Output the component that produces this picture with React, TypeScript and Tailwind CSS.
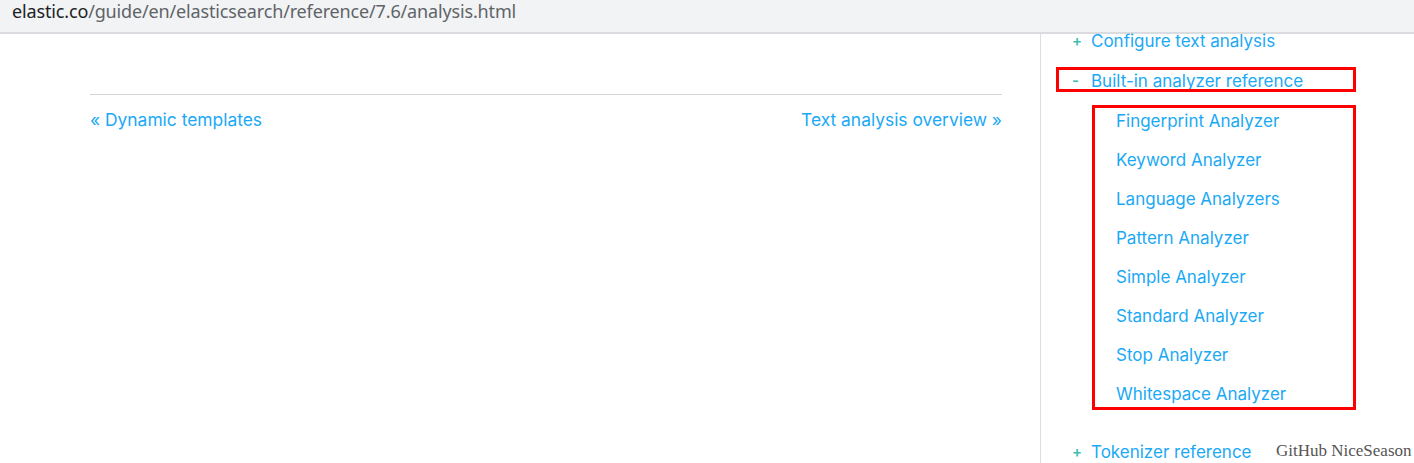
import React from "react";

const subItems = [
  "Fingerprint Analyzer",
  "Keyword Analyzer",
  "Language Analyzers",
  "Pattern Analyzer",
  "Simple Analyzer",
  "Standard Analyzer",
  "Stop Analyzer",
  "Whitespace Analyzer",
];

function Toggle({ open }: { open?: boolean }) {
  return (
    <span className="inline-block w-[20px] text-[#3ebeb0] text-[15px] font-semibold pl-[1px]">
      {open ? "-" : "+"}
    </span>
  );
}

export default function App() {
  return (
    <div className="relative w-[1414px] h-[463px] overflow-hidden bg-white font-['Inter',sans-serif]">
      <div className="h-[34px] bg-[#f1f3f4] border-b-2 border-[#dadce0] flex items-start">
        <div className="pl-[12px] text-[18px] leading-[22px] tracking-[-0.15px] font-['Noto_Sans',sans-serif] text-[#5f6368]">
          <span className="text-[#202124]">elastic.co</span>/guide/en/elasticsearch/reference/7.6/analysis.html
        </div>
      </div>

      <div className="flex h-[429px]">
        <main className="w-[1040px] pl-[90px] pr-[38px] pt-[60px]">
          <div className="border-t border-[#d4d4d4]" />
          <div className="flex justify-between mt-[14px] text-[17.4px] leading-[22px] text-[#1ba9f5]">
            <a>« Dynamic templates</a>
            <a>Text analysis overview »</a>
          </div>
        </main>

        <aside className="relative flex-1 border-l border-[#dddddd] pl-[30px]">
          <ul className="-mt-[12px] text-[17px] text-[#1ba9f5]">
            <li className="h-[39px] flex items-center">
              <Toggle />
              <span>Configure text analysis</span>
            </li>
            <li className="h-[41px] flex items-center">
              <Toggle open />
              <span>Built-in analyzer reference</span>
            </li>
            {subItems.map((s) => (
              <li key={s} className="h-[39px] flex items-center pl-[45px]">
                {s}
              </li>
            ))}
            <li className="h-[19px]" />
            <li className="h-[39px] flex items-center">
              <Toggle />
              <span>Tokenizer reference</span>
            </li>
          </ul>

          {/* red annotation boxes */}
          <div className="absolute left-[15px] top-[33px] w-[300px] h-[25px] border-[3px] border-[#ff0000]" />
          <div className="absolute left-[51px] top-[71px] w-[264px] h-[305px] border-[3px] border-[#ff0000]" />
        </aside>
      </div>

      <div className="absolute left-[1276px] top-[440px] text-[17px] leading-[22px] text-[#555555] font-['Liberation_Serif',serif]">
        GitHub NiceSeason
      </div>
    </div>
  );
}
